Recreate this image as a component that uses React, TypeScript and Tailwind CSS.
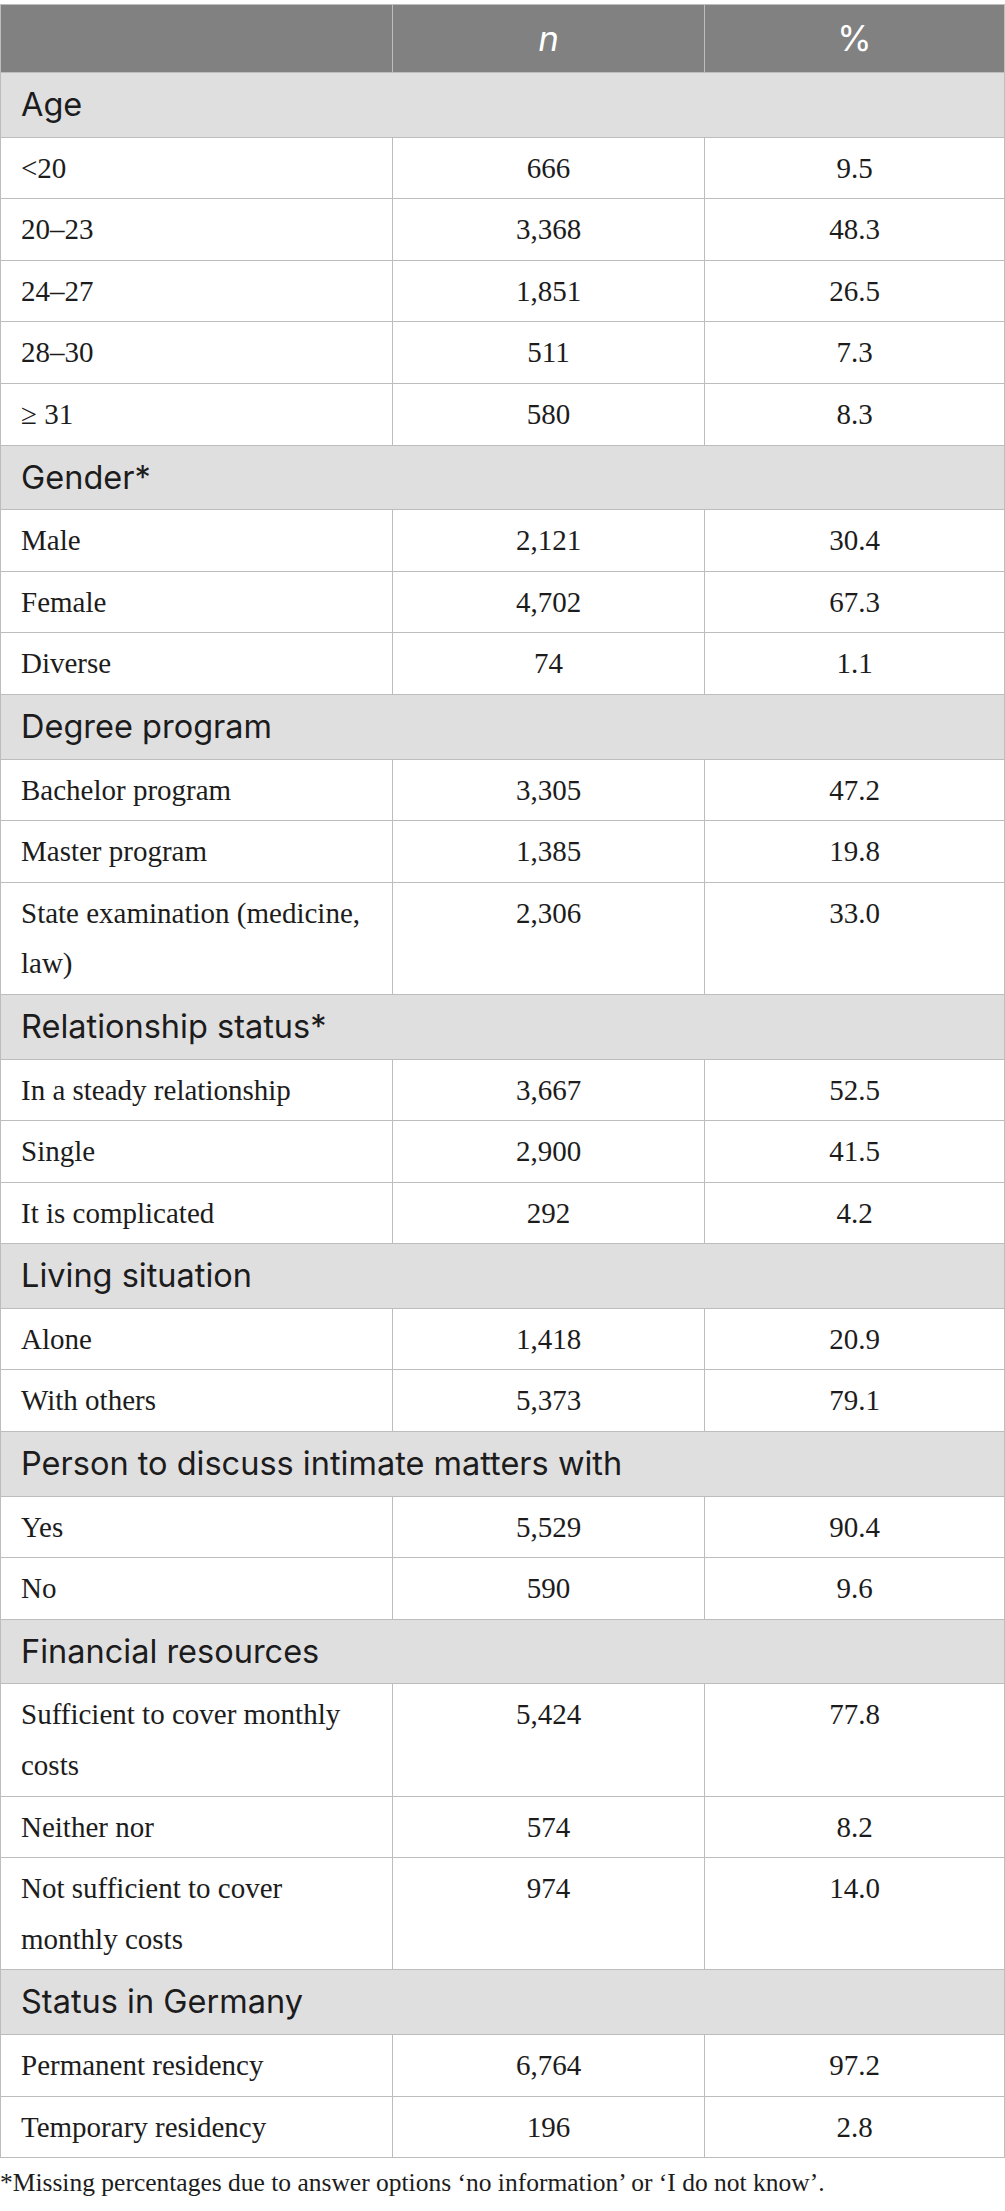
import React from "react";

type Row =
  | { kind: "group"; label: string }
  | { kind: "data"; label: string; n: string; p: string };

const rows: Row[] = [
  { kind: "group", label: "Age" },
  { kind: "data", label: "<20", n: "666", p: "9.5" },
  { kind: "data", label: "20–23", n: "3,368", p: "48.3" },
  { kind: "data", label: "24–27", n: "1,851", p: "26.5" },
  { kind: "data", label: "28–30", n: "511", p: "7.3" },
  { kind: "data", label: "≥ 31", n: "580", p: "8.3" },
  { kind: "group", label: "Gender*" },
  { kind: "data", label: "Male", n: "2,121", p: "30.4" },
  { kind: "data", label: "Female", n: "4,702", p: "67.3" },
  { kind: "data", label: "Diverse", n: "74", p: "1.1" },
  { kind: "group", label: "Degree program" },
  { kind: "data", label: "Bachelor program", n: "3,305", p: "47.2" },
  { kind: "data", label: "Master program", n: "1,385", p: "19.8" },
  { kind: "data", label: "State examination (medicine, law)", n: "2,306", p: "33.0" },
  { kind: "group", label: "Relationship status*" },
  { kind: "data", label: "In a steady relationship", n: "3,667", p: "52.5" },
  { kind: "data", label: "Single", n: "2,900", p: "41.5" },
  { kind: "data", label: "It is complicated", n: "292", p: "4.2" },
  { kind: "group", label: "Living situation" },
  { kind: "data", label: "Alone", n: "1,418", p: "20.9" },
  { kind: "data", label: "With others", n: "5,373", p: "79.1" },
  { kind: "group", label: "Person to discuss intimate matters with" },
  { kind: "data", label: "Yes", n: "5,529", p: "90.4" },
  { kind: "data", label: "No", n: "590", p: "9.6" },
  { kind: "group", label: "Financial resources" },
  { kind: "data", label: "Sufficient to cover monthly costs", n: "5,424", p: "77.8" },
  { kind: "data", label: "Neither nor", n: "574", p: "8.2" },
  { kind: "data", label: "Not sufficient to cover monthly costs", n: "974", p: "14.0" },
  { kind: "group", label: "Status in Germany" },
  { kind: "data", label: "Permanent residency", n: "6,764", p: "97.2" },
  { kind: "data", label: "Temporary residency", n: "196", p: "2.8" },
];

const sans = "font-['Inter','Lato',sans-serif]";
const serif = "font-['Liberation_Serif','Times_New_Roman',serif]";

export default function App() {
  return (
    <div className="w-[1005px] bg-white pt-[4px]">
      <table className="w-[1004px] border-collapse table-fixed">
        <colgroup>
          <col className="w-[392px]" />
          <col className="w-[312px]" />
          <col className="w-[300px]" />
        </colgroup>
        <thead>
          <tr className="bg-[#808180]">
            <th className="border border-[#bdbdbd] py-[5px] leading-[57px]"></th>
            <th className={`border border-[#bdbdbd] py-[5px] leading-[57px] text-center text-[35px] font-normal italic text-white ${sans}`}>
              n
            </th>
            <th className={`border border-[#bdbdbd] py-[5px] leading-[57px] text-center text-[35px] font-normal text-white ${sans}`}>
              %
            </th>
          </tr>
        </thead>
        <tbody>
          {rows.map((r, i) =>
            r.kind === "group" ? (
              <tr key={i} className="bg-[#e0dfe0]">
                <td
                  colSpan={3}
                  className={`border border-[#bdbdbd] px-[20px] py-[5px] leading-[53.6px] text-[32.5px] text-[#1c1c1c] ${sans}`}
                >
                  {r.label}
                </td>
              </tr>
            ) : (
              <tr key={i} className="bg-white">
                <td
                  className={`border border-[#bdbdbd] pl-[20px] pr-[18px] py-[5px] align-top leading-[50.6px] text-[29px] text-[#1c1c1c] ${serif}`}
                >
                  {r.label}
                </td>
                <td
                  className={`border border-[#bdbdbd] px-[20px] py-[5px] align-top text-center leading-[50.6px] text-[29px] text-[#1c1c1c] ${serif}`}
                >
                  {r.n}
                </td>
                <td
                  className={`border border-[#bdbdbd] px-[20px] py-[5px] align-top text-center leading-[50.6px] text-[29px] text-[#1c1c1c] ${serif}`}
                >
                  {r.p}
                </td>
              </tr>
            )
          )}
        </tbody>
      </table>
      <p className={`mt-[7px] text-[25.5px] leading-[36px] text-[#1c1c1c] ${serif}`}>
        *Missing percentages due to answer options ‘no information’ or ‘I do not know’.
      </p>
      <div className="h-[20px]" />
    </div>
  );
}
